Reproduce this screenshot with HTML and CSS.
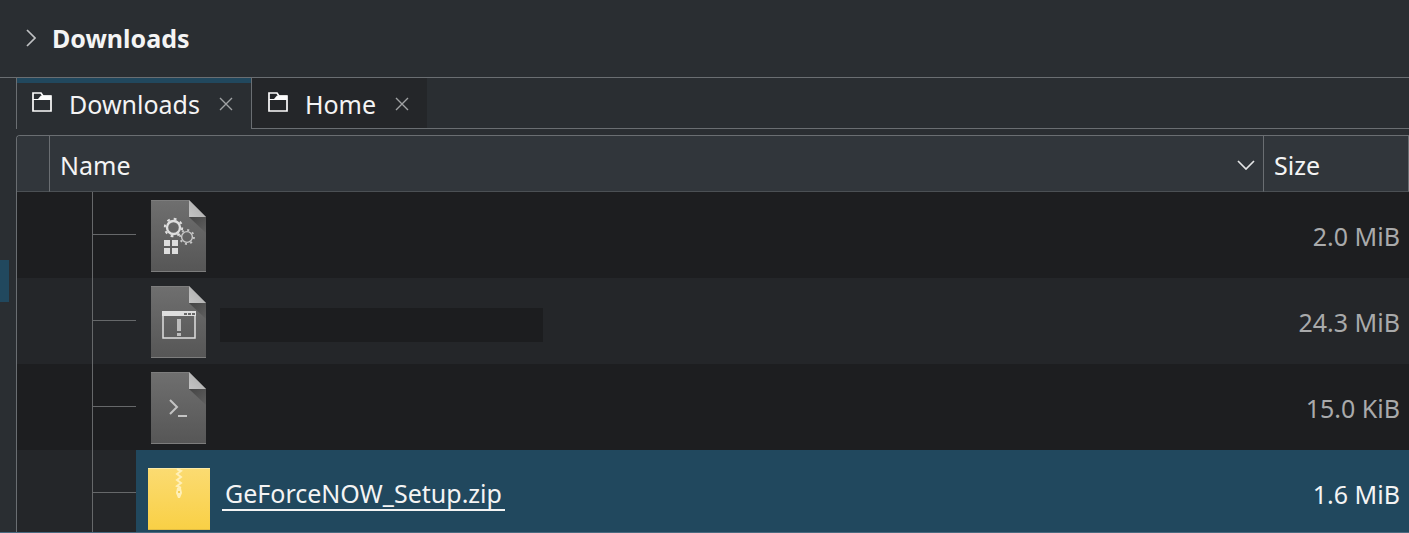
FILE: index.html
```html
<!DOCTYPE html>
<html lang="en">
<head>
  <meta charset="UTF-8">
  <title>Downloads</title>
  <link rel="stylesheet" href="styles.css">
</head>
<body>
  <svg class="defs" width="0" height="0" aria-hidden="true">
    <defs>
      <linearGradient id="paper" x1="0" y1="0" x2="0" y2="1">
        <stop offset="0" stop-color="#6f6f6f"/>
        <stop offset="1" stop-color="#565656"/>
      </linearGradient>
      <linearGradient id="fold" x1="0" y1="1" x2="1" y2="0">
        <stop offset="0" stop-color="#c4c4c4"/>
        <stop offset="1" stop-color="#a8a8a8"/>
      </linearGradient>
      <linearGradient id="shade" x1="0" y1="0" x2="1" y2="1">
        <stop offset="0" stop-color="#444"/>
        <stop offset="1" stop-color="#606060"/>
      </linearGradient>
      <linearGradient id="yellow" x1="0" y1="0" x2="0" y2="1">
        <stop offset="0" stop-color="#fbdb72"/>
        <stop offset="1" stop-color="#f9d045"/>
      </linearGradient>
      <symbol id="page" viewBox="0 0 64 72">
        <path d="M4 0H42L59 17V72H4z" fill="url(#paper)"/>
        <path d="M42 17H59V33z" fill="url(#shade)"/>
        <path d="M4 .5H42M4 71.5H59" stroke="#7d7d7d" stroke-width="1"/>
        <path d="M42 0L59 17H42z" fill="url(#fold)"/>
      </symbol>
      <symbol id="folder" viewBox="0 0 20 20">
        <path d="M1 19V1H9L11 4H19V19z" fill="none" stroke="#fcfcfc" stroke-width="1.7"/>
        <path d="M1 7H6L9 3.500H19V8H1z" fill="#fcfcfc"/>
      </symbol>
      <symbol id="cross" viewBox="0 0 14 14">
        <path d="M1 1L13 13M13 1L1 13" fill="none" stroke="#a0a2a4" stroke-width="1.4"/>
      </symbol>
    </defs>
  </svg>

  <header class="location">
    <svg class="chevron" viewBox="0 0 10 18" aria-hidden="true"><path d="M1 1L9 9L1 17" fill="none" stroke="#bfc1c3" stroke-width="1.7"/></svg>
    <h1>Downloads</h1>
  </header>

  <div class="window">
    <aside class="places"><div class="current-place"></div></aside>
    <main class="view">
      <nav class="tabs">
        <div class="tab active">
          <button class="tab-label"><svg class="folder"><use href="#folder"/></svg>Downloads</button>
          <button class="close" aria-label="Close Downloads"><svg><use href="#cross"/></svg></button>
        </div>
        <div class="tab">
          <button class="tab-label"><svg class="folder"><use href="#folder"/></svg>Home</button>
          <button class="close" aria-label="Close Home"><svg><use href="#cross"/></svg></button>
        </div>
      </nav>

      <table class="files">
        <thead>
          <tr>
            <th class="gutter"></th>
            <th class="name">
              <button class="sort">Name
                <svg viewBox="0 0 18 10" aria-hidden="true"><path d="M1 1L9 9L17 1" fill="none" stroke="#e4e5e6" stroke-width="1.7"/></svg>
              </button>
            </th>
            <th class="size">Size</th>
          </tr>
        </thead>
        <tbody>
          <tr>
            <td></td>
            <td>
              <div class="row">
                <span class="tree"></span>
                <div class="entry">
                  <svg class="icon" viewBox="0 0 64 72">
                    <use href="#page"/>
                    <circle cx="26.500" cy="27.500" r="6.5" fill="none" stroke="#dedede" stroke-width="2.4"/>
                    <circle cx="26.500" cy="27.500" r="8.7" fill="none" stroke="#dedede" stroke-width="2" stroke-dasharray="2.8 4.03"/>
                    <circle cx="40" cy="37" r="5.4" fill="none" stroke="#c8c8c8" stroke-width="1.4"/>
                    <circle cx="40" cy="37" r="7" fill="none" stroke="#c8c8c8" stroke-width="1.8" stroke-dasharray="2 3.5"/>
                    <path d="M17 40h6v6h-6zM25 40h6v6h-6zM17 48h6v6h-6zM25 48h6v6h-6z" fill="#dedede"/>
                  </svg>
                </div>
              </div>
            </td>
            <td class="size">2.0 MiB</td>
          </tr>
          <tr>
            <td></td>
            <td>
              <div class="row">
                <span class="tree"></span>
                <div class="entry">
                  <svg class="icon" viewBox="0 0 64 72">
                    <use href="#page"/>
                    <path d="M16 26H48V52H16z" fill="none" stroke="#dedede" stroke-width="1.5"/>
                    <path d="M15 25H49V30H15z" fill="#dedede"/>
                    <path d="M37 27h3v2h-3zM41 27h3v2h-3zM45 27h3v2h-3z" fill="#686868"/>
                    <path d="M30 33h4v12h-4zM30 47h4v3h-4z" fill="#bdbdbd"/>
                  </svg>
                  <span class="hidden-name"></span>
                </div>
              </div>
            </td>
            <td class="size">24.3 MiB</td>
          </tr>
          <tr>
            <td></td>
            <td>
              <div class="row">
                <span class="tree"></span>
                <div class="entry">
                  <svg class="icon" viewBox="0 0 64 72">
                    <use href="#page"/>
                    <path d="M23 28L30 35L23 42" fill="none" stroke="#c4c4c4" stroke-width="2"/>
                    <path d="M31 44H40" stroke="#c4c4c4" stroke-width="2"/>
                  </svg>
                </div>
              </div>
            </td>
            <td class="size">15.0 KiB</td>
          </tr>
          <tr class="selected">
            <td></td>
            <td>
              <div class="row">
                <span class="tree"></span>
                <div class="entry">
                  <svg class="icon" viewBox="0 0 64 72">
                    <path d="M1 10H63V72H1z" fill="url(#yellow)"/>
                    <path d="M1 10.500H63" stroke="#fdeaa6"/>
                    <path d="M1 71.500H63" stroke="#e2bd42"/>
                    <path d="M30 11l4 2l-4 3l4 3l-4 3l4 3l-4 3l4 2" fill="none" stroke="#fff0b8" stroke-width="2"/>
                    <path d="M30 30h4l1 5l-2 5h-2l-2-5z" fill="#fff0b8"/>
                    <path d="M31 33h2v2h-2z" fill="#f5cf58"/>
                  </svg>
                  <a class="file-name" href="#">GeForceNOW_Setup.zip</a>
                </div>
              </div>
            </td>
            <td class="size">1.6 MiB</td>
          </tr>
        </tbody>
      </table>
    </main>
  </div>
</body>
</html>
```
FILE: styles.css
```css
* {
  box-sizing: border-box;
}
html {
  overflow: hidden;
}
body {
  display: flex;
  flex-direction: column;
  height: 100vh;
  margin: 0;
  overflow: hidden;
  font-family: "Noto Sans", sans-serif;
  font-size: 25px;
  line-height: 32px;
  color: #f4f4f4;
  background: #2a2e32;
  border-bottom: 1px solid #4a6a80;
}
button {
  padding: 0;
  font: inherit;
  color: inherit;
  background: none;
  border: none;
  cursor: pointer;
}
.defs {
  position: absolute;
}

/* location bar */
.location {
  display: flex;
  flex: none;
  align-items: center;
  gap: 16px;
  height: 78px;
  padding: 0 0 2px 26px;
  border-bottom: 1px solid #6a6e72;
}
.chevron {
  width: 10px;
  height: 18px;
}
h1 {
  margin: 0;
  font-size: 25px;
}

.window {
  display: flex;
  flex: 1;
  min-height: 0;
}
.places {
  width: 9px;
  padding-top: 182px;
  margin-right: 7px;
}
.current-place {
  height: 42px;
  background: #21485e;
}
.view {
  flex: 1;
  min-width: 0;
}

/* tabs */
.tabs {
  display: flex;
  height: 51px;
  margin-bottom: 6px;
}
.tabs::after {
  content: "";
  flex: 1;
  border-bottom: 1px solid #6a6e72;
}
.tab {
  display: flex;
  align-items: center;
  gap: 19px;
  padding: 1px 18px 0 16px;
  background: #242629;
  border-bottom: 1px solid #6a6e72;
}
.tab.active {
  padding: 0 18px 0 15px;
  background: none;
  border: solid #6a6e72;
  border-width: 0 1px;
  box-shadow: inset 0 5px #21485e;
}
.tab-label {
  display: flex;
  align-items: center;
  gap: 17px;
}
.folder {
  width: 20px;
  height: 20px;
  margin-bottom: 4px;
}
.close,
.close svg {
  display: block;
  width: 14px;
  height: 14px;
}

/* file list */
.files {
  width: 100%;
  table-layout: fixed;
  border-collapse: separate;
  border-spacing: 0;
  border: solid #6a6e72;
  border-width: 1px 0 0 1px;
  border-radius: 4px 0 0 0;
}
th,
td {
  padding: 0;
  font-weight: normal;
}
th {
  height: 56px;
  padding-top: 2px;
  text-align: left;
  background: #31363b;
  border-right: 1px solid #6a6e72;
  border-bottom: 1px solid #4b5054;
}
th.gutter {
  width: 33px;
  border-radius: 3px 0 0 0;
}
th.size {
  width: 145px;
  padding-left: 10px;
}
.sort {
  display: flex;
  align-items: center;
  justify-content: space-between;
  width: 100%;
  padding: 0 8px 0 10px;
}
.sort svg {
  width: 18px;
  height: 10px;
}
tbody tr {
  background: #1d1e20;
}
tbody tr:nth-child(even) {
  background: #242629;
}
.row {
  display: flex;
  height: 86px;
}
.tree {
  width: 44px;
  margin-left: 42px;
  border-left: 1px solid #66686a;
  background: linear-gradient(#66686a, #66686a) 0 42px / 100% 1px no-repeat;
}
.entry {
  display: flex;
  flex: 1;
  align-items: center;
  padding: 2px 0 0 11px;
}
.icon {
  width: 64px;
  height: 72px;
}
.hidden-name {
  width: 323px;
  height: 34px;
  margin: 6px 0 0 9px;
  background: #1c1d1f;
}
td.size {
  padding: 2px 9px 0 0;
  text-align: right;
  color: #a9aaab;
}
.selected .entry,
.selected .size {
  color: #f4f4f4;
  background: #21485e;
}
.file-name {
  padding: 0 3px;
  margin-left: 11px;
  color: inherit;
  text-decoration: none;
  border-bottom: 2px solid #f4f4f4;
}
```
